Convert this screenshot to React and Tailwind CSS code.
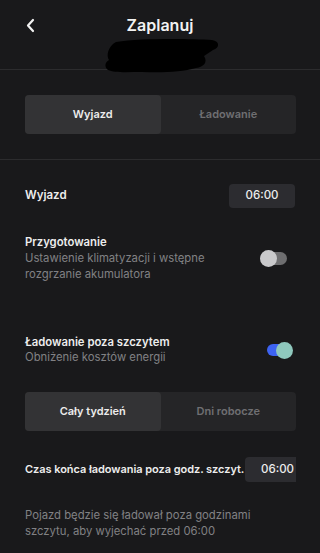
import React from 'react';

const Segmented = ({ left, right }) => (
  <div className="ml-[25px] mr-[24px] h-[39px] flex rounded-[4px] bg-[#252527]">
    <div className="flex-1 flex items-center justify-center rounded-[4px] bg-[#333335] text-[11px] font-semibold text-[#ececec]">
      {left}
    </div>
    <div className="flex-1 flex items-center justify-center text-[11px] font-semibold text-[#6f6f72]">
      {right}
    </div>
  </div>
);

const Toggle = ({ on }) =>
  on ? (
    <div className="relative w-[26px] h-[16px]">
      <div className="absolute left-0 top-[2px] w-[22px] h-[12px] rounded-full bg-[#3d63f2]" />
      <div className="absolute right-0 top-0 w-[17px] h-[17px] rounded-full bg-[#8fc8bd]" />
    </div>
  ) : (
    <div className="relative w-[27px] h-[17px]">
      <div className="absolute right-0 top-[2px] w-[22px] h-[13px] rounded-full bg-[#6e6e70]" />
      <div className="absolute left-0 top-0 w-[17px] h-[17px] rounded-full bg-[#c9c9cb]" />
    </div>
  );

export default function App() {
  return (
    <div
      className="w-[320px] h-[553px] overflow-hidden bg-[#19191b] text-white"
      style={{ fontFamily: 'Inter, "Noto Sans", sans-serif' }}
    >
      {/* Header */}
      <div className="relative h-[70px] border-b border-[#2c2c2e]">
        <svg className="absolute left-[24px] top-[17px]" width="14" height="18" viewBox="0 0 14 18">
          <polyline points="9,3 4,8.5 9,14" fill="none" stroke="#f2f2f2" strokeWidth="2.2" strokeLinecap="round" strokeLinejoin="round" />
        </svg>
        <div className="pt-[14px] text-center text-[16px] leading-[22px] font-semibold text-[#f2f2f2]">
          Zaplanuj
        </div>
        <svg className="absolute left-[102px] top-[36px]" width="120" height="40" viewBox="0 0 120 40">
          <path
            d="M14 6 C40 2 88 3 110 4 C118 5 118 12 111 14 L102 20 C106 26 102 31 94 32 C80 36 60 37 40 36 C26 36 12 37 6 34 C2 31 3 26 7 24 C4 20 6 10 14 6 Z"
            fill="#000"
          />
        </svg>
      </div>

      {/* Tabs */}
      <div className="pt-[25px] pb-[25px] border-b border-[#2c2c2e]">
        <Segmented left="Wyjazd" right="Ładowanie" />
      </div>

      {/* Wyjazd */}
      <div className="mt-[24px] ml-[25px] mr-[25px] flex items-center justify-between">
        <span className="text-[11.5px] font-semibold text-[#ededed]">Wyjazd</span>
        <div className="w-[66px] h-[24px] flex items-center justify-center rounded-[4px] bg-[#2c2c30] text-[11.5px] font-medium text-[#ededed]">
          06:00
        </div>
      </div>

      {/* Przygotowanie */}
      <div className="mt-[26px] ml-[25px] mr-[33px] flex items-center justify-between">
        <div className="text-[11.3px] leading-[16px]">
          <div className="font-semibold text-[#ededed]">Przygotowanie</div>
          <div className="text-[#818184]">
            Ustawienie klimatyzacji i wstępne
            <br />
            rozgrzanie akumulatora
          </div>
        </div>
        <Toggle on={false} />
      </div>

      {/* Ładowanie poza szczytem */}
      <div className="mt-[53px] ml-[25px] mr-[27px] flex items-center justify-between">
        <div className="text-[11.3px] leading-[15px]">
          <div className="font-semibold text-[#ededed]">Ładowanie poza szczytem</div>
          <div className="text-[#818184]">Obniżenie kosztów energii</div>
        </div>
        <Toggle on={true} />
      </div>

      <div className="mt-[27px]">
        <Segmented left="Cały tydzień" right="Dni robocze" />
      </div>

      {/* Czas końca */}
      <div className="mt-[26px] ml-[25px] mr-[24px] flex items-center justify-between">
        <span className="text-[11px] font-semibold text-[#ededed] whitespace-nowrap tracking-[-0.05px]">
          Czas końca ładowania poza godz. szczyt.
        </span>
        <div className="w-[51px] h-[25px] flex items-center justify-end pr-[2px] rounded-l-[4px] bg-[#2c2c30] text-[11.5px] font-medium text-[#ededed]">
          06:00
        </div>
      </div>

      <div className="mt-[25px] ml-[25px] mr-[25px] text-[11.3px] leading-[16px] text-[#818184]">
        Pojazd będzie się ładował poza godzinami
        <br />
        szczytu, aby wyjechać przed 06:00
      </div>
    </div>
  );
}
